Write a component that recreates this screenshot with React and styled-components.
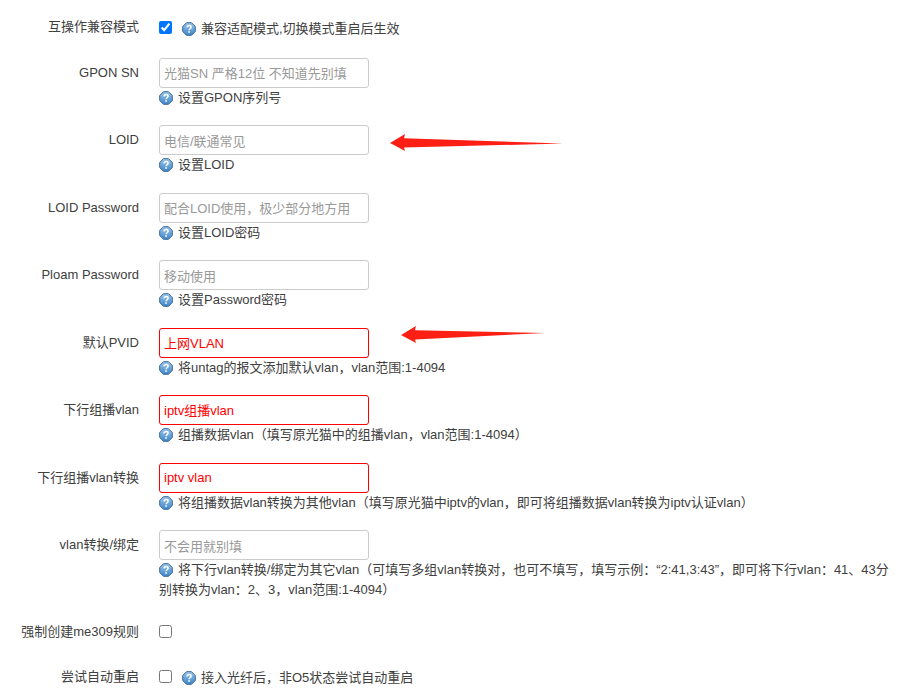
import styled, { createGlobalStyle } from 'styled-components'

const GlobalStyle = createGlobalStyle`
  html, body {
    margin: 0;
    padding: 0;
    background: #fff;
  }
  body {
    font-family: "Liberation Sans", "Noto Sans CJK SC", sans-serif;
    font-size: 13px;
    color: #404040;
  }
`

const Page = styled.div`
  position: relative;
  width: 904px;
  height: 700px;
  padding-top: 13.75px;
  box-sizing: border-box;
  overflow: hidden;
`

const Row = styled.div`
  display: grid;
  grid-template-columns: 139px 734px;
  column-gap: 20px;
  padding-bottom: 17.5px;
`

const Label = styled.label`
  text-align: right;
  line-height: 18px;
  padding-top: ${(p) => p.$top}px;
  white-space: nowrap;
`

const CheckLine = styled.div`
  display: flex;
  align-items: flex-start;
  height: ${(p) => p.$height}px;
  padding-top: 7px;
  box-sizing: border-box;
`

const Check = styled.input.attrs({ type: 'checkbox' })`
  width: 13px;
  height: 13px;
  margin: 0;
  flex: none;
`

const Hint = styled.div`
  line-height: 20px;
  ${(p) => p.$inline && 'margin: -2px 0 0 10px;'}
`

const Field = styled.input`
  display: block;
  width: 210px;
  height: 30px;
  box-sizing: border-box;
  padding: ${(p) => (p.$error ? '0 4px 1px' : '2px 4px 0')};
  font: inherit;
  color: ${(p) => (p.$error ? '#f00' : '#404040')};
  background: #fff;
  border: 1px solid ${(p) => (p.$error ? '#f00' : '#ccc')};
  border-radius: 3px;
  outline: none;

  &::placeholder {
    color: #999;
  }
`

const HelpSvg = styled.svg`
  width: 14px;
  height: 14px;
  margin-right: 5px;
  vertical-align: -3px;
`

const ArrowSvg = styled.svg`
  position: absolute;
  left: ${(p) => p.$left}px;
  top: ${(p) => p.$top}px;
`

const HelpIcon = () => (
  <HelpSvg viewBox="0 0 14 14">
    <defs>
      <linearGradient id="helpFill" x1="0" y1="0" x2="0" y2="1">
        <stop offset="0" stopColor="#9cc6ea" />
        <stop offset="1" stopColor="#3f86c8" />
      </linearGradient>
    </defs>
    <path
      d="M4.5 .7h5L13.300 4.500v5L9.500 13.300h-5L.7 9.500v-5z"
      fill="url(#helpFill)"
      stroke="#35689a"
      strokeWidth="1"
      strokeLinejoin="round"
    />
    <path
      d="M5.100 5.400c0-1.200 1-1.800 2-1.800s2 .6 2 1.700c0 1.400-2 1.500-2 3"
      fill="none"
      stroke="#fff"
      strokeWidth="1.500"
    />
    <path d="M6.200 9.300h1.700v1.500H6.200z" fill="#fff" />
  </HelpSvg>
)

// hand drawn annotation arrows, tail tapers to a point
const Arrow = ({ left, top, width, tailY }) => (
  <ArrowSvg $left={left} $top={top} width={width} height="18" viewBox={`0 0 ${width} 18`}>
    <path
      d={`M0 9 L15 0 L14 4.300 L${width} ${tailY} L14 13.500 L15 17 Z`}
      fill="#fe1f14"
    />
  </ArrowSvg>
)

const rows = [
  { label: 'GPON SN', placeholder: '光猫SN 严格12位 不知道先别填', hint: '设置GPON序列号' },
  { label: 'LOID', placeholder: '电信/联通常见', hint: '设置LOID' },
  { label: 'LOID Password', placeholder: '配合LOID使用，极少部分地方用', hint: '设置LOID密码' },
  { label: 'Ploam Password', placeholder: '移动使用', hint: '设置Password密码' },
  { label: '默认PVID', value: '上网VLAN', hint: '将untag的报文添加默认vlan，vlan范围:1-4094' },
  { label: '下行组播vlan', value: 'iptv组播vlan', hint: '组播数据vlan（填写原光猫中的组播vlan，vlan范围:1-4094）' },
  {
    label: '下行组播vlan转换',
    value: 'iptv vlan',
    hint: '将组播数据vlan转换为其他vlan（填写原光猫中iptv的vlan，即可将组播数据vlan转换为iptv认证vlan）',
  },
  {
    label: 'vlan转换/绑定',
    placeholder: '不会用就别填',
    hint: '将下行vlan转换/绑定为其它vlan（可填写多组vlan转换对，也可不填写，填写示例：“2:41,3:43”，即可将下行vlan：41、43分别转换为vlan：2、3，vlan范围:1-4094）',
  },
]

const App = () => {
  return (
    <>
      <GlobalStyle />
      <Page>
        <Row>
          <Label $top={4}>互操作兼容模式</Label>
          <CheckLine $height={26.5}>
            <Check defaultChecked />
            <Hint $inline>
              <HelpIcon />
              兼容适配模式,切换模式重启后生效
            </Hint>
          </CheckLine>
        </Row>

        {rows.map((row) => (
          <Row key={row.label}>
            <Label $top={6}>{row.label}</Label>
            <div>
              <Field
                placeholder={row.placeholder}
                defaultValue={row.value}
                $error={Boolean(row.value)}
              />
              <Hint>
                <HelpIcon />
                {row.hint}
              </Hint>
            </div>
          </Row>
        ))}

        <Row>
          <Label $top={5}>强制创建me309规则</Label>
          <CheckLine $height={27.5}>
            <Check />
          </CheckLine>
        </Row>

        <Row>
          <Label $top={5}>尝试自动重启</Label>
          <CheckLine $height={27.5}>
            <Check />
            <Hint $inline>
              <HelpIcon />
              接入光纤后，非O5状态尝试自动重启
            </Hint>
          </CheckLine>
        </Row>

        <Arrow left={390} top={134} width={173} tailY={9.5} />
        <Arrow left={401} top={326} width={144} tailY={7} />
      </Page>
    </>
  )
}

export default App
